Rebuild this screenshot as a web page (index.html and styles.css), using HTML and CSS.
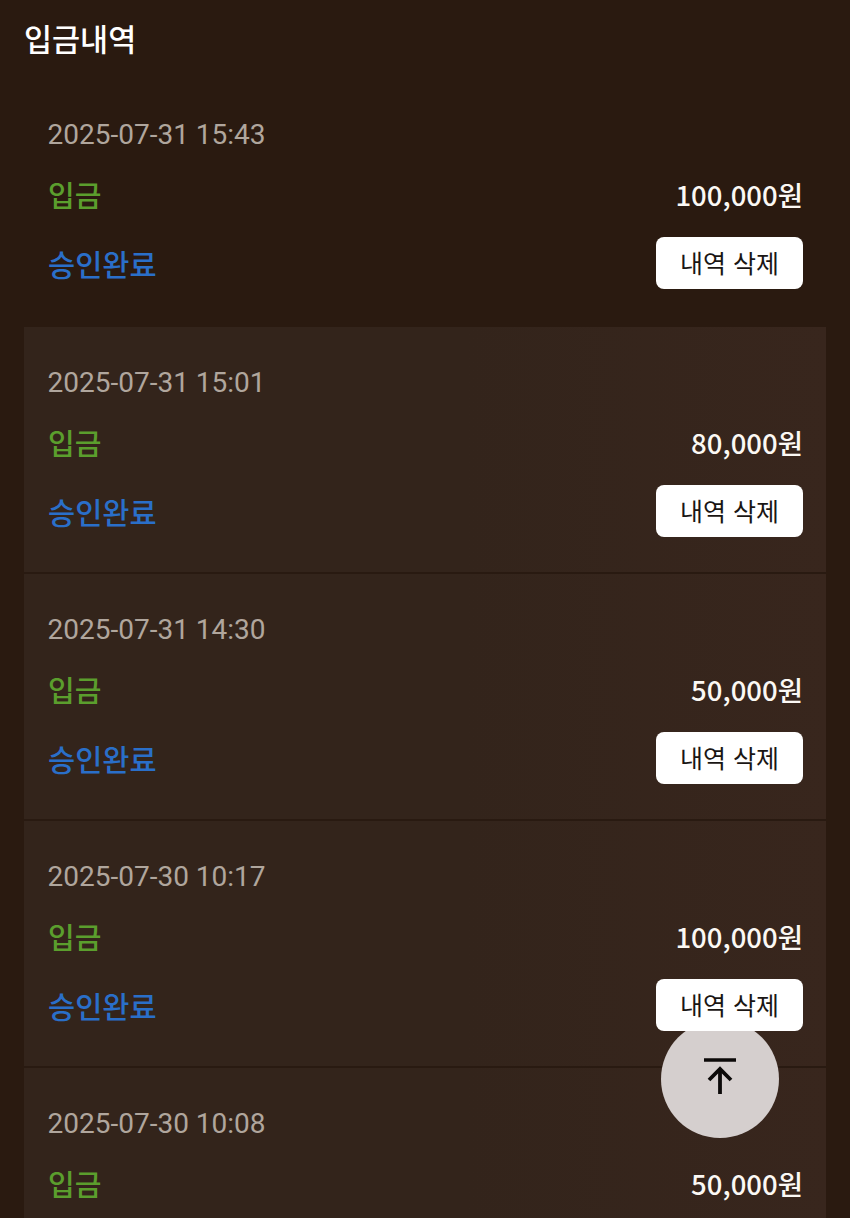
FILE: index.html
```html
<!DOCTYPE html>
<html lang="ko">
<head>
<meta charset="utf-8">
<title>입금내역</title>
<link rel="stylesheet" href="styles.css">
</head>
<body>
<main class="page">
  <h1 class="title">입금내역</h1>
  <ul class="list">
    <li class="item item-plain">
      <div class="date">2025-07-31 15:43</div>
      <div class="row row-amount"><span class="type">입금</span><span class="amount">100,000원</span></div>
      <div class="row row-status"><span class="status">승인완료</span><button class="delete" type="button">내역 삭제</button></div>
    </li>
    <li class="item">
      <div class="date">2025-07-31 15:01</div>
      <div class="row row-amount"><span class="type">입금</span><span class="amount">80,000원</span></div>
      <div class="row row-status"><span class="status">승인완료</span><button class="delete" type="button">내역 삭제</button></div>
    </li>
    <li class="item">
      <div class="date">2025-07-31 14:30</div>
      <div class="row row-amount"><span class="type">입금</span><span class="amount">50,000원</span></div>
      <div class="row row-status"><span class="status">승인완료</span><button class="delete" type="button">내역 삭제</button></div>
    </li>
    <li class="item">
      <div class="date">2025-07-30 10:17</div>
      <div class="row row-amount"><span class="type">입금</span><span class="amount">100,000원</span></div>
      <div class="row row-status"><span class="status">승인완료</span><button class="delete" type="button">내역 삭제</button></div>
    </li>
    <li class="item">
      <div class="date">2025-07-30 10:08</div>
      <div class="row row-amount"><span class="type">입금</span><span class="amount">50,000원</span></div>
    </li>
  </ul>
</main>
<button class="to-top" type="button" aria-label="맨 위로">
  <svg viewBox="0 0 32 36" width="32" height="36" fill="none" stroke="#0c0a09">
    <path d="M0 2H32" stroke-width="3.500"/>
    <path d="M16 36V11" stroke-width="3.800"/>
    <path d="M5 22L16 11L27 22" stroke-width="3.800"/>
  </svg>
</button>
</body>
</html>
```
FILE: styles.css
```css
* {
  box-sizing: border-box;
}

html,
body {
  margin: 0;
  height: 1218px;
  overflow: hidden;
}

body {
  position: relative;
  background: #2a1a10;
  font-family: "Noto Sans CJK KR", "Noto Sans", sans-serif;
}

.page {
  padding: 0 24px;
}

.title {
  margin: 0;
  height: 80px;
  padding-top: 15px;
  font-size: 30.500px;
  line-height: 46px;
  font-weight: 500;
  color: #fff;
}

.list {
  margin: 0;
  padding: 0;
  list-style: none;
}

.item {
  height: 247px;
  padding: 36px 24px 0;
  background: linear-gradient(90deg, #33241b 55%, #38261d);
  border-bottom: 2px solid #291a11;
}

.item-plain {
  background: transparent;
  border-bottom: 0;
  padding-top: 35px;
}

.date {
  margin-left: -0.500px;
  font-family: Roboto, sans-serif;
  font-size: 28px;
  line-height: 40px;
  color: #b0a69d;
}

.row {
  display: flex;
  justify-content: space-between;
  align-items: center;
}

.row-amount {
  margin-top: 18px;
  height: 42px;
}

.row-status {
  margin-top: 22px;
  height: 52px;
}

.type,
.status {
  font-weight: 500;
}

.type {
  font-size: 29px;
  color: #5b9e2d;
}

.status {
  font-size: 29.500px;
  color: #2a6fc9;
}

.amount {
  margin-right: -1px;
  font-size: 27.500px;
  font-weight: 500;
  color: #fbf8f4;
}

.delete {
  position: relative;
  z-index: 2;
  width: 147px;
  height: 52px;
  margin-right: -1px;
  padding: 0 0 3px;
  border: 0;
  border-radius: 8px;
  background: #fff;
  font-family: inherit;
  font-size: 25px;
  color: #1a1614;
}

.to-top {
  position: absolute;
  z-index: 1;
  left: 661px;
  top: 1020px;
  width: 118px;
  height: 118px;
  padding: 0 0 6px;
  border: 0;
  border-radius: 50%;
  background: #d5cfce;
  display: flex;
  align-items: center;
  justify-content: center;
}
```
